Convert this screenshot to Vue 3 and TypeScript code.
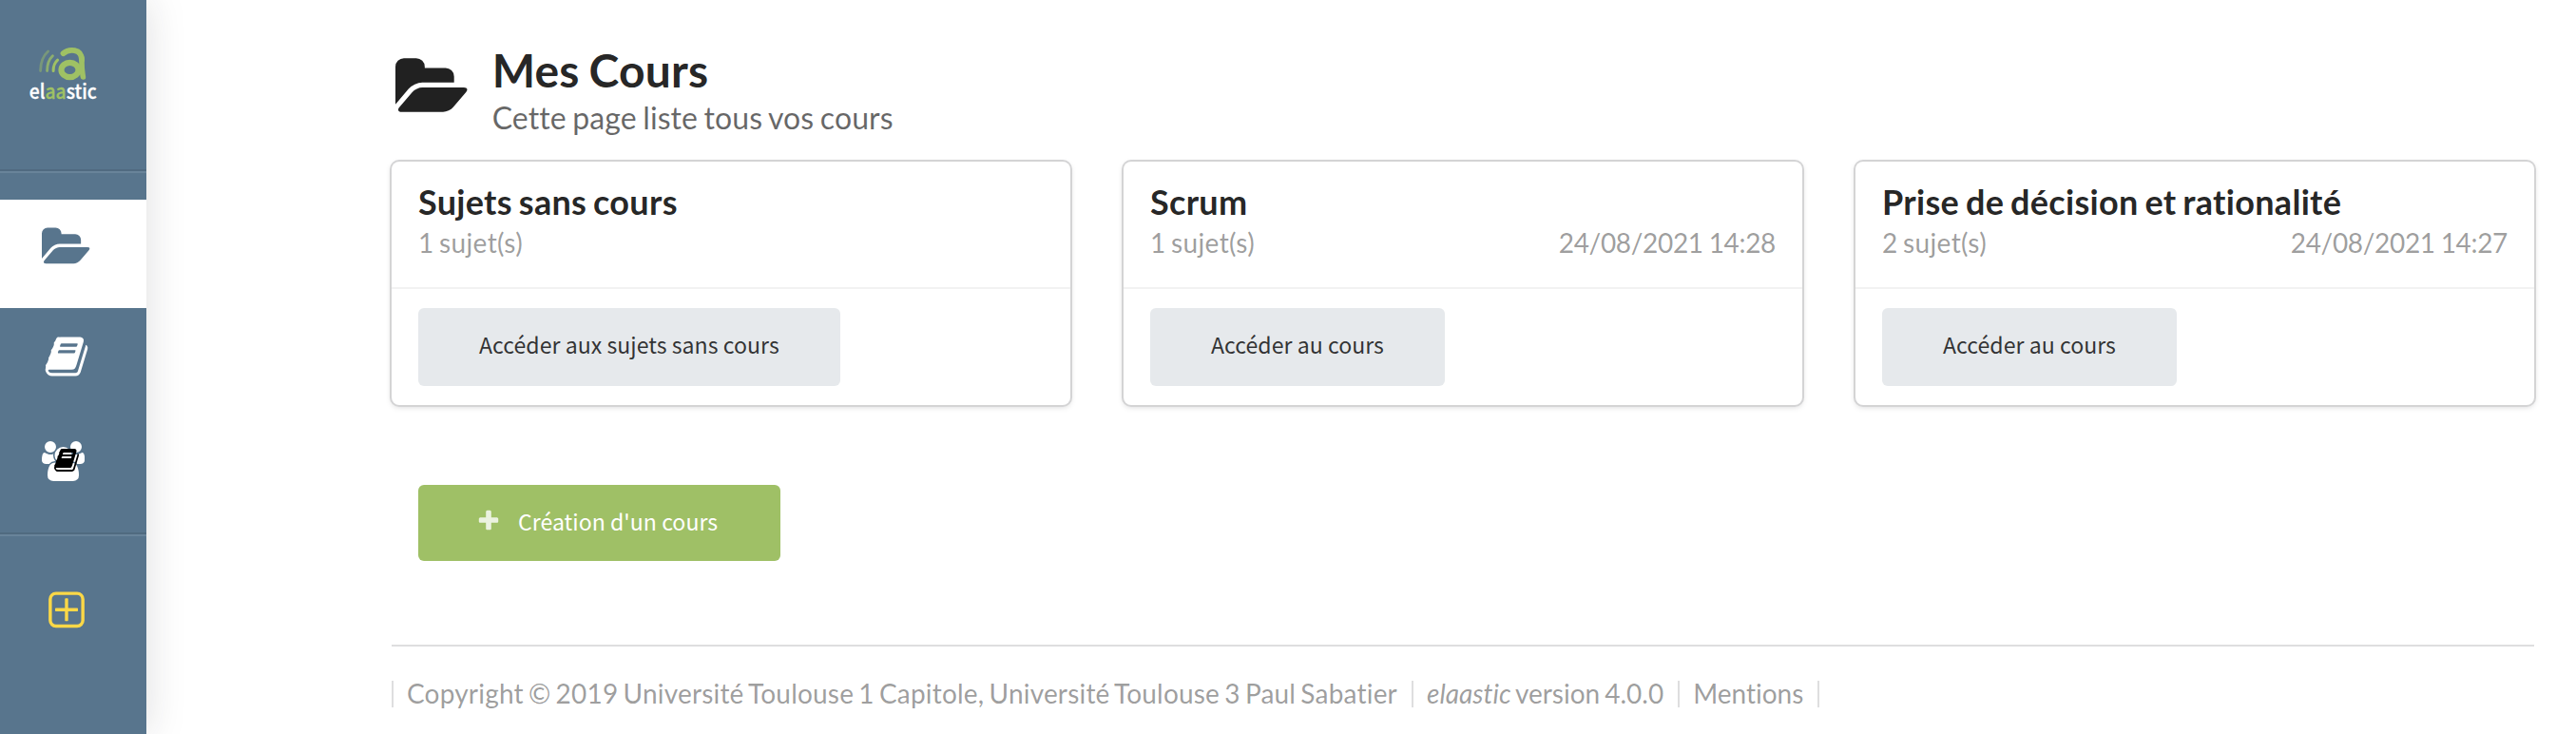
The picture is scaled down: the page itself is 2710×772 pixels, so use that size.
<script setup lang="ts">
interface Course {
  title: string
  count: string
  date: string
  action: string
}

const courses: Course[] = [
  { title: 'Sujets sans cours', count: '1 sujet(s)', date: '', action: 'Accéder aux sujets sans cours' },
  { title: 'Scrum', count: '1 sujet(s)', date: '24/08/2021 14:28', action: 'Accéder au cours' },
  { title: 'Prise de décision et rationalité', count: '2 sujet(s)', date: '24/08/2021 14:27', action: 'Accéder au cours' },
]

const folderOpen =
  'M1879 952q0 31-31 66l-336 396q-43 51-120.5 86.5t-143.5 35.5h-1088q-34 0-60.5-13t-26.5-43q0-31 31-66l336-396q43-51 120.5-86.5t143.5-35.5h1088q34 0 60.5 13t26.5 43zm-343-344v160h-832q-94 0-197 47.5t-164 119.5l-337 396-5 6q0-4-.5-12.5t-.5-12.5v-960q0-92 66-158t158-66h320q92 0 158 66t66 158v32h544q92 0 158 66t66 158z'
const book =
  'M1703 478q40 57 18 129l-275 906q-19 64-76.5 107.5t-122.5 43.5h-923q-77 0-148.5-53.5t-99.5-131.5q-24-67-2-127 0-4 3-27t4-37q1-8-3-21.5t-3-19.5q2-11 8-21t16.5-23.5 16.5-23.5q23-38 45-91.5t30-91.5q3-10 .5-30t-.5-28q3-11 17-28t17-23q21-36 42-92t25-90q1-9-2.5-32t.5-28q4-13 22-30.5t22-22.5q19-26 42.5-84.5t27.5-96.5q1-8-3-25.5t-2-26.5q2-8 9-18t18-23 17-21q8-12 16.5-30.5t15-35 16-36 19.5-32 26.5-23.5 36-11.5 47.5 5.5l-1 3q38-9 51-9h761q74 0 114 56t18 130l-274 906q-36 119-71.5 153.5t-128.5 34.5h-869q-27 0-38 15-11 16-1 43 24 70 144 70h923q29 0 56-15.5t35-41.5l300-987q7-22 5-57 38 15 59 43zm-1064 2q-4 13 2 22.5t20 9.5h608q13 0 25.5-9.5t16.5-22.5l21-64q4-13-2-22.5t-20-9.5h-608q-13 0-25.5 9.5t-16.5 22.5zm-83 256q-4 13 2 22.5t20 9.5h608q13 0 25.5-9.5t16.5-22.5l21-64q4-13-2-22.5t-20-9.5h-608q-13 0-25.5 9.5t-16.5 22.5z'
const users =
  'M593 896q-162 5-265 128h-134q-82 0-138-40.5t-56-118.5q0-353 124-353 6 0 43.5 21t97.5 42.5 119 21.5q67 0 133-23-5 37-5 66 0 159 93 256zm1071 637q0 120-73 189.5t-194 69.5h-874q-121 0-194-69.5t-73-189.5q0-53 3.5-103.5t14-109 26.5-108.5 43-97.5 62-81 85.5-53.5 111.5-20q10 0 43 21.5t73 48 107 48 135 21.5 135-21.5 107-48 73-48 43-21.5q61 0 111.5 20t85.5 53.5 62 81 43 97.5 26.5 108.5 14 109 3.5 103.5zm-1024-1277q0 106-75 181t-181 75-181-75-75-181 75-181 181-75 181 75 75 181zm704 384q0 159-112.5 271.5t-271.5 112.5-271.5-112.5-112.5-271.5 112.5-271.5 271.5-112.5 271.5 112.5 112.5 271.5zm576 225q0 78-56 118.5t-138 40.5h-134q-103-123-265-128 93-97 93-256 0-29-5-66 66 23 133 23 59 0 119-21.5t97.5-42.5 43.5-21q124 0 124 353zm-128-609q0 106-75 181t-181 75-181-75-75-181 75-181 181-75 181 75 75 181z'
const plusSquare =
  'M1344 800v64q0 14-9 23t-23 9h-352v352q0 14-9 23t-23 9h-64q-14 0-23-9t-9-23v-352h-352q-14 0-23-9t-9-23v-64q0-14 9-23t23-9h352v-352q0-14 9-23t23-9h64q14 0 23 9t9 23v352h352q14 0 23 9t9 23zm128 448v-832q0-66-47-113t-113-47h-832q-66 0-113 47t-47 113v832q0 66 47 113t113 47h832q66 0 113-47t47-113zm128-832v832q0 119-84.5 203.5t-203.5 84.5h-832q-119 0-203.5-84.5t-84.5-203.5v-832q0-119 84.5-203.5t203.5-84.5h832q119 0 203.5 84.5t84.5 203.5z'
const plus =
  'M1600 736v192q0 40-28 68t-68 28h-416v416q0 40-28 68t-68 28h-192q-40 0-68-28t-28-68v-416h-416q-40 0-68-28t-28-68v-192q0-40 28-68t68-28h416v-416q0-40 28-68t68-28h192q40 0 68 28t28 68v416h416q40 0 68 28t28 68z'
</script>

<template>
  <div class="page">
    <nav class="sidebar">
      <a class="brand">
        <svg class="logo" viewBox="0 0 82 66">
          <g fill="none" stroke="#9fc164" stroke-linecap="round">
            <path d="M16.6 30.5C16.6 22 19 15 24.6 10" stroke-width="2.8" opacity=".45" />
            <path d="M23.6 30.5C23.6 24 25.3 18.6 29.4 14.8" stroke-width="2.9" opacity=".75" />
            <path d="M30.1 30.5C30.1 26 31.4 22 34.6 19.2" stroke-width="3" />
            <path d="M40.5 12.2C46.5 7 60 7 60 19" stroke-width="5.8" />
            <ellipse cx="47.5" cy="29.5" rx="9" ry="7.7" stroke-width="6.2" />
            <path d="M60 17V22C60 30 61 34 61.4 37" stroke-width="5.6" />
          </g>
          <text class="wordmark" x="4.8" y="60.4" textLength="71" lengthAdjust="spacingAndGlyphs">el<tspan class="accent">aa</tspan>stic</text>
        </svg>
      </a>
      <a class="item active"><svg class="icon wide" viewBox="0 0 1920 1792"><path :d="folderOpen" /></svg></a>
      <a class="item books"><svg class="icon" viewBox="0 0 1792 1792"><path :d="book" /></svg></a>
      <a class="item shared">
        <svg class="users" viewBox="0 0 1920 1792"><path :d="users" /></svg>
        <svg class="overlay" viewBox="0 0 1792 1792"><path :d="book" /></svg>
      </a>
      <a class="item create"><svg class="icon" viewBox="0 0 1792 1792"><path :d="plusSquare" /></svg></a>
    </nav>

    <main class="content">
      <header class="heading">
        <svg class="heading-icon" viewBox="0 0 1920 1792"><path :d="folderOpen" /></svg>
        <div>
          <h2>Mes Cours</h2>
          <p>Cette page liste tous vos cours</p>
        </div>
      </header>

      <section class="cards">
        <article v-for="course in courses" :key="course.title" class="card">
          <div class="summary">
            <h3>{{ course.title }}</h3>
            <div class="meta">
              <span>{{ course.count }}</span>
              <span class="date">{{ course.date }}</span>
            </div>
          </div>
          <div class="extra">
            <button class="button">{{ course.action }}</button>
          </div>
        </article>
      </section>

      <button class="button primary">
        <svg viewBox="0 0 1792 1792"><path :d="plus" /></svg>
        <span>Création d'un cours</span>
      </button>

      <footer class="footer">
        <span class="copyright">Copyright © 2019 Université Toulouse 1 Capitole, Université Toulouse 3 Paul Sabatier</span>
        <span><em>elaastic</em> version 4.0.0</span>
        <span>Mentions</span>
      </footer>
    </main>
  </div>
</template>

<style>
body {
  margin: 0;
  background: #fff;
}
</style>

<style scoped>
.page {
  display: flex;
  height: 772px;
  overflow: hidden;
  font-family: Lato, sans-serif;
  font-variant-ligatures: none;
  font-size: 28px;
  line-height: 40px;
  color: rgba(0, 0, 0, 0.87);
}
.sidebar {
  flex: none;
  display: flex;
  flex-direction: column;
  width: 154px;
  background: #58758d;
  box-shadow: 0 0 40px rgba(34, 36, 38, 0.15);
}
.brand {
  box-sizing: border-box;
  height: 180px;
  padding: 44px 0 0 26px;
  border-bottom: 2px solid #506a80;
}
.logo {
  display: block;
  width: 82px;
  height: 66px;
}
.wordmark {
  font-family: "Noto Sans CJK SC", sans-serif;
  font-weight: 500;
  font-size: 21px;
  fill: #fff;
  stroke: #fff;
  stroke-width: 0.3px;
}
.accent {
  fill: #9fc164;
  stroke: #9fc164;
}
.item {
  box-sizing: border-box;
  display: flex;
  fill: #fff;
}
.active {
  height: 144px;
  padding: 26px 0 0 44px;
  border-top: 2px solid #69849a;
  background: linear-gradient(#58758d 28px, #fff 28px);
  fill: #58758d;
}
.icon {
  width: 48px;
  height: 48px;
}
.wide {
  width: 51.43px;
  margin-top: 28px;
}
.books {
  height: 118px;
  padding: 27px 0 0 46px;
}
.shared {
  position: relative;
  height: 120px;
  padding: 22px 0 0 44px;
  border-bottom: 2px solid #506a80;
}
.users {
  width: 45px;
  height: 42px;
}
.overlay {
  position: absolute;
  left: 56px;
  top: 28px;
  width: 28px;
  height: 28px;
  fill: #000;
}
.create {
  padding: 55px 0 0 46px;
  border-top: 2px solid #69849a;
  fill: #fbd847;
}
.content {
  display: flex;
  flex-direction: column;
  width: 2254px;
  margin-left: 258px;
}
.heading {
  display: flex;
  align-items: flex-start;
  height: 170px;
}
.heading-icon {
  width: 77.14px;
  height: 72px;
  margin: 56px 24.5px 0 4px;
  fill: rgba(0, 0, 0, 0.87);
}
h2 {
  margin: 43px 0 0;
  font-size: 48px;
  line-height: 61px;
  letter-spacing: 0.2px;
  word-spacing: -2px;
}
.heading p {
  margin: 1px 0 0;
  font-size: 32px;
  line-height: 38px;
  letter-spacing: 0.1px;
  word-spacing: -1.8px;
  color: rgba(0, 0, 0, 0.6);
}
.cards {
  display: grid;
  grid-template-columns: repeat(3, 714px);
  gap: 56px;
}
.card {
  height: 256px;
  border-radius: 8px;
  background: #fff;
  box-shadow: 0 2px 6px 0 #d4d4d5, 0 0 0 2px #d4d4d5;
}
.summary {
  box-sizing: border-box;
  height: 132px;
  padding: 19px 28px 0;
}
h3 {
  margin: 0;
  font-size: 36px;
  line-height: 46px;
  letter-spacing: 0.3px;
  word-spacing: -2.2px;
}
.meta {
  display: flex;
  justify-content: space-between;
  letter-spacing: 0.35px;
  word-spacing: -2px;
  color: rgba(0, 0, 0, 0.4);
}
.date {
  letter-spacing: -0.32px;
  word-spacing: -1px;
}
.extra {
  padding: 20px 28px 0;
  border-top: 2px solid rgba(0, 0, 0, 0.05);
}
.button {
  height: 82px;
  padding: 0 64px 6px;
  border: 0;
  border-radius: 6px;
  background: #e6e9ec;
  color: rgba(0, 0, 0, 0.8);
  font: 23.1px/40px "Noto Sans CJK SC", sans-serif;
  letter-spacing: 0.02px;
  white-space: nowrap;
}
.primary {
  display: flex;
  align-items: center;
  align-self: flex-start;
  height: 80px;
  margin: 84px 0 0 28px;
  padding: 0 65.5px 4px 64px;
  background: #9fc066;
  color: #fff;
}
.primary svg {
  width: 26px;
  height: 26px;
  margin: 0 18px 0 -3px;
  fill: #fff;
  opacity: 0.8;
}
.footer {
  display: flex;
  margin-top: 88px;
  padding-top: 36px;
  border-top: 2px solid #dededf;
  color: rgba(0, 0, 0, 0.4);
  line-height: 26px;
  word-spacing: -2.2px;
}
.footer span {
  padding: 0 15px 2px 14px;
  border-left: 2px solid #dededf;
}
.footer .copyright {
  letter-spacing: 0.2px;
}
.footer span:last-child {
  border-right: 2px solid #dededf;
}
</style>
